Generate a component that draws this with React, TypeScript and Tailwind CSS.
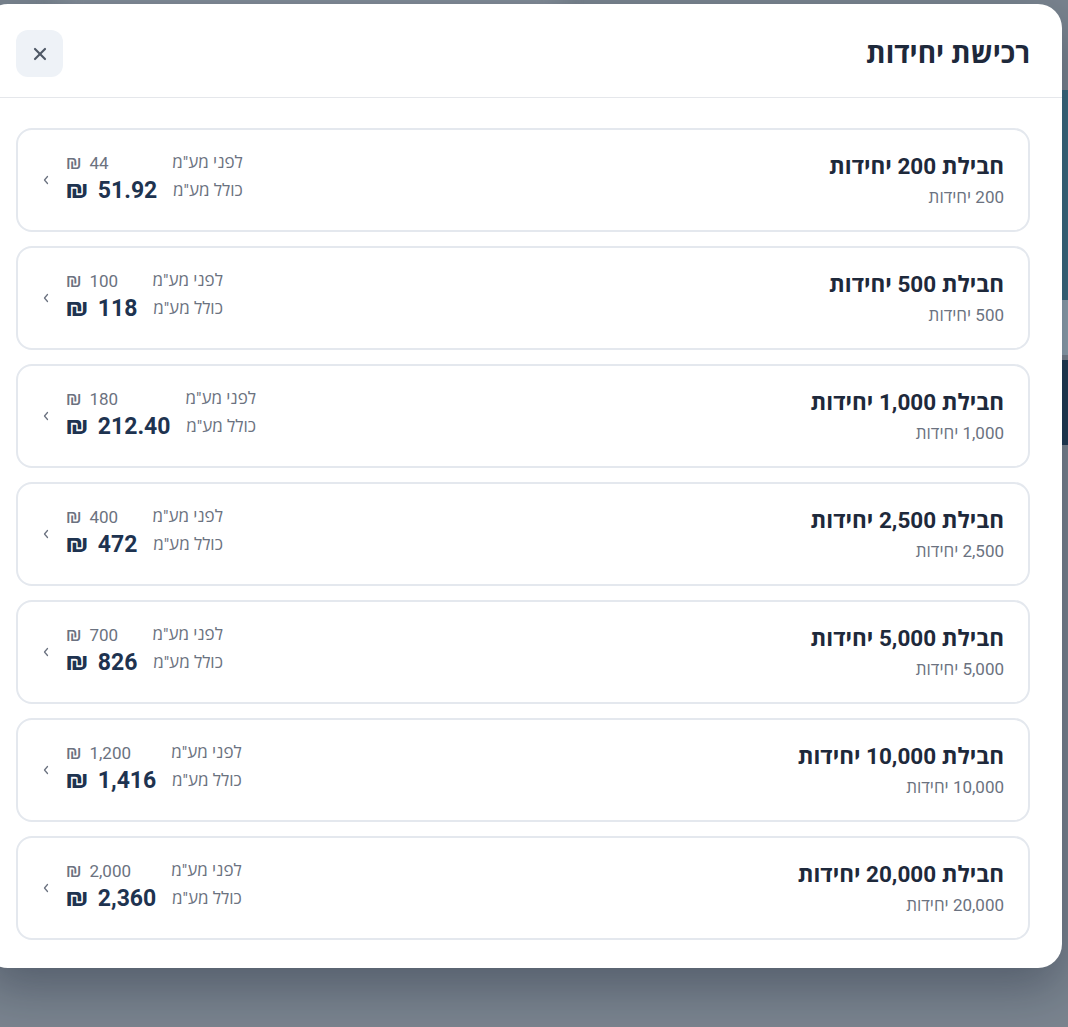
import React from "react";

type Pack = { units: string; before: string; total: string };

const packs: Pack[] = [
  { units: "200", before: "44", total: "51.92" },
  { units: "500", before: "100", total: "118" },
  { units: "1,000", before: "180", total: "212.40" },
  { units: "2,500", before: "400", total: "472" },
  { units: "5,000", before: "700", total: "826" },
  { units: "10,000", before: "1,200", total: "1,416" },
  { units: "20,000", before: "2,000", total: "2,360" },
];

// Latin digits from Roboto, Hebrew letters from the next family that has them
const font = {
  fontFamily: 'Roboto, "Open Sans", "Liberation Sans", "DejaVu Sans", sans-serif',
};

function CloseIcon() {
  return (
    <svg width="20" height="20" viewBox="0 0 24 24" fill="none" stroke="currentColor" strokeWidth="2.6" strokeLinecap="round">
      <path d="M18 6 6 18" />
      <path d="m6 6 12 12" />
    </svg>
  );
}

function Chevron() {
  return (
    <svg width="8" height="12" viewBox="0 0 8 12" fill="none" stroke="currentColor" strokeWidth="1.3" strokeLinecap="round" strokeLinejoin="round">
      <path d="M5.5 2.5 2.5 6l3 3.5" />
    </svg>
  );
}

function PackCard({ p }: { p: Pack }) {
  return (
    <button
      type="button"
      className="flex h-[104px] w-full items-center justify-between rounded-[16px] border-2 border-[#e4e8ee] bg-white px-[24px] text-right"
    >
      <div className="flex flex-col gap-[5px]">
        <div className="text-[22.5px] font-bold leading-[29px] text-[#1e293b]">חבילת {p.units} יחידות</div>
        <div className="text-[17px] leading-[22px] text-[#6b7280]">{p.units} יחידות</div>
      </div>
      <div className="flex items-center gap-[16px]">
        <div className="grid grid-cols-[auto_auto] gap-x-[15px] pb-[6px]">
          <div className="text-[17px] leading-[26px] text-[#6b7280]">לפני מע"מ</div>
          <div className="flex items-baseline justify-end gap-[8px] text-[17px] leading-[26px] text-[#6b7280]">
            <span>{p.before}</span>
            <span className="text-[20px]">₪</span>
          </div>
          <div className="text-[17px] leading-[28px] text-[#6b7280]">כולל מע"מ</div>
          <div className="flex items-baseline justify-end gap-[10px] text-[23px] font-bold leading-[28px] text-[#1e3350]">
            <span>{p.total}</span>
            <span className="text-[25px]">₪</span>
          </div>
        </div>
        <span className="text-[#6b7280]">
          <Chevron />
        </span>
      </div>
    </button>
  );
}

export default function App() {
  return (
    <div className="relative h-[1027px] w-full overflow-hidden bg-[#7a848f]" style={font}>
      {/* blurred page behind the dialog */}
      <div className="absolute right-[-60px] top-[90px] h-[210px] w-[200px] bg-[#3b6a7f]" />
      <div className="absolute right-[-60px] top-[300px] h-[55px] w-[200px] bg-[#8fa2ae]" />
      <div className="absolute right-[-60px] top-[360px] h-[85px] w-[200px] bg-[#1f3a52]" />
      <div className="absolute left-[60px] top-[-40px] h-[50px] w-[500px] bg-[#838d98] blur-[10px]" />

      <div
        dir="rtl"
        className="absolute left-[-16px] top-[4px] w-[1078px] rounded-[24px] bg-white shadow-[0_20px_50px_rgba(15,23,42,0.35)]"
      >
        <div className="flex items-center justify-between border-b border-[#e5e7eb] px-[32px] pb-[20px] pt-[26px]">
          <h2 className="text-[28px] font-bold leading-[32px] text-[#1e293b]">רכישת יחידות</h2>
          <button
            type="button"
            aria-label="סגירה"
            className="flex h-[47px] w-[47px] items-center justify-center rounded-[12px] bg-[#eef2f7] text-[#4f5866]"
          >
            <CloseIcon />
          </button>
        </div>
        <div className="flex flex-col gap-[14px] px-[32px] pb-[28px] pt-[30px]">
          {packs.map((p) => (
            <PackCard key={p.units} p={p} />
          ))}
        </div>
      </div>
    </div>
  );
}
